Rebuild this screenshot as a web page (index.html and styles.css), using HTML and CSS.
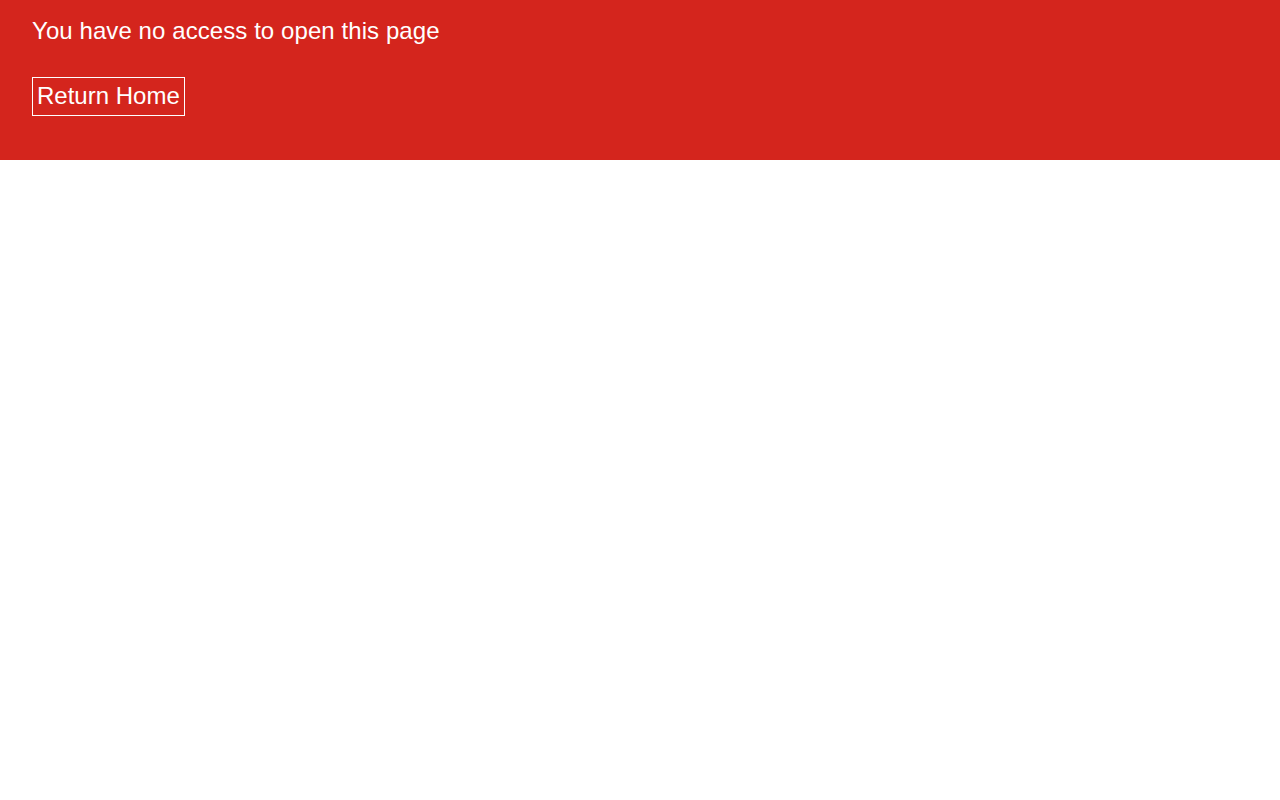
FILE: index.html
```html
<!DOCTYPE html>
<html lang="en">
<head>
<meta charset="utf-8">
<title>No access</title>
<link rel="stylesheet" href="styles.css">
</head>
<body>
<div class="banner">
  <p class="message">You have no access to open this page</p>
  <a class="home-btn" href="#">Return Home</a>
</div>
</body>
</html>
```
FILE: styles.css
```css
html, body {
  margin: 0;
  padding: 0;
  background: #ffffff;
}
body {
  font-family: "Liberation Sans", Arial, Helvetica, sans-serif;
}
.banner {
  background: #d4251d;
  color: #ffffff;
  height: 160px;
  box-sizing: border-box;
  padding: 17px 32px 0;
  display: flex;
  flex-direction: column;
  align-items: flex-start;
}
.message {
  margin: 0;
  font-size: 24px;
  line-height: 28px;
  letter-spacing: 0.08px;
}
.home-btn {
  margin-top: 32px;
  display: inline-block;
  color: #ffffff;
  text-decoration: none;
  font-size: 24px;
  line-height: 28px;
  padding: 4px 4px 5px;
  border: 1px solid #ffffff;
}
```
